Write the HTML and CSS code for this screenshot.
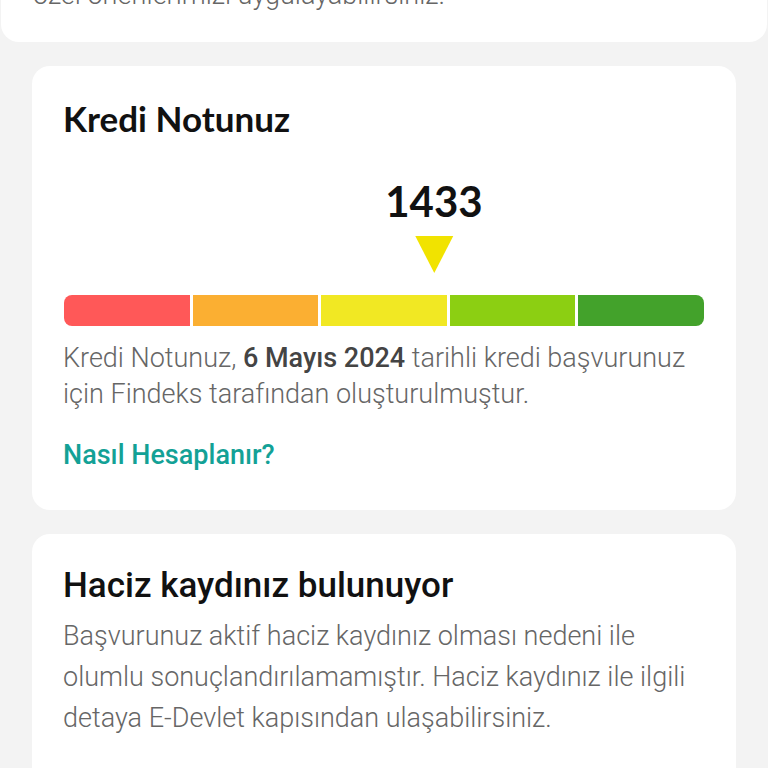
FILE: index.html
```html
<!DOCTYPE html>
<html lang="tr">
<head>
<meta charset="utf-8">
<link rel="stylesheet" href="styles.css">
</head>
<body>
<div class="page">
  <div class="card top-card">
    <p class="top-text">özel önerilerimizi uygulayabilirsiniz.</p>
  </div>
  <div class="card score-card">
    <h2 class="title">Kredi Notunuz</h2>
    <div class="gauge">
      <div class="marker" style="left: 57.8%;">
        <div class="score">1433</div>
        <div class="tri"></div>
      </div>
      <div class="bar">
        <div class="seg s1"></div>
        <div class="seg s2"></div>
        <div class="seg s3"></div>
        <div class="seg s4"></div>
        <div class="seg s5"></div>
      </div>
    </div>
    <p class="desc">Kredi Notunuz, <b>6 Mayıs 2024</b> tarihli kredi başvurunuz için Findeks tarafından oluşturulmuştur.</p>
    <a class="link">Nasıl Hesaplanır?</a>
  </div>
  <div class="card haciz-card">
    <h2 class="title2">Haciz kaydınız bulunuyor</h2>
    <p class="desc2">Başvurunuz aktif haciz kaydınız olması nedeni ile olumlu sonuçlandırılamamıştır. Haciz kaydınız ile ilgili detaya E-Devlet kapısından ulaşabilirsiniz.</p>
  </div>
</div>
</body>
</html>
```
FILE: styles.css
```css
html, body {
  margin: 0;
  padding: 0;
  background: #f3f3f3;
}
body {
  width: 768px;
  height: 768px;
  overflow: hidden;
  font-family: Roboto, "Liberation Sans", sans-serif;
}
.page {
  display: flex;
  flex-direction: column;
  gap: 24px;
  margin-top: -58px;
}
.card {
  background: #fff;
  border-radius: 18px;
  margin: 0 32px;
}
.top-card {
  margin: 0 1px;
  height: 100px;
  box-sizing: border-box;
  padding: 35px 32px 0;
}
.top-text {
  margin: 0;
  font-size: 27px;
  font-weight: 300;
  line-height: 36px;
  color: #666;
}
.score-card {
  padding: 30px 31px 39px;
  display: flex;
  flex-direction: column;
  align-items: flex-start;
}
.title {
  margin: 0;
  font-family: Lato, "Open Sans", sans-serif;
  font-weight: 700;
  font-size: 35px;
  color: #111;
  line-height: 44px;
}
.gauge {
  position: relative;
  width: 640px;
  margin-left: 1px;
  padding-top: 155px;
}
.marker {
  position: absolute;
  top: 37px;
  transform: translateX(-50%);
  display: flex;
  flex-direction: column;
  align-items: center;
}
.score {
  font-family: Lato, "Open Sans", sans-serif;
  font-weight: 700;
  font-size: 42px;
  line-height: 48px;
  color: #111;
}
.tri {
  margin-top: 11px;
  width: 0;
  height: 0;
  border-left: 19px solid transparent;
  border-right: 19px solid transparent;
  border-top: 37px solid #f1e300;
}
.bar {
  display: flex;
  gap: 3px;
  height: 31px;
}
.seg { flex: 1; }
.s1 { background: #ff5858; border-radius: 8px 0 0 8px; }
.s2 { background: #fbaf32; }
.s3 { background: #f1e823; }
.s4 { background: #8ccf12; }
.s5 { background: #43a22b; border-radius: 0 8px 8px 0; }
.desc {
  margin: 14px 0 0;
  max-width: 630px;
  font-size: 27px;
  font-weight: 300;
  line-height: 36px;
  color: #666;
}
.desc b {
  font-weight: 500;
  color: #444;
}
.link {
  margin-top: 27px;
  font-size: 27px;
  font-weight: 500;
  color: #13a196;
  line-height: 32px;
}
.haciz-card {
  padding: 30px 31px 40px;
  height: 300px;
}
.title2 {
  margin: 0;
  font-family: Roboto, sans-serif;
  font-weight: 500;
  font-size: 35px;
  line-height: 44px;
  color: #111;
}
.desc2 {
  margin: 8px 0 0;
  max-width: 630px;
  font-size: 27px;
  font-weight: 300;
  line-height: 41px;
  color: #666;
}
```
